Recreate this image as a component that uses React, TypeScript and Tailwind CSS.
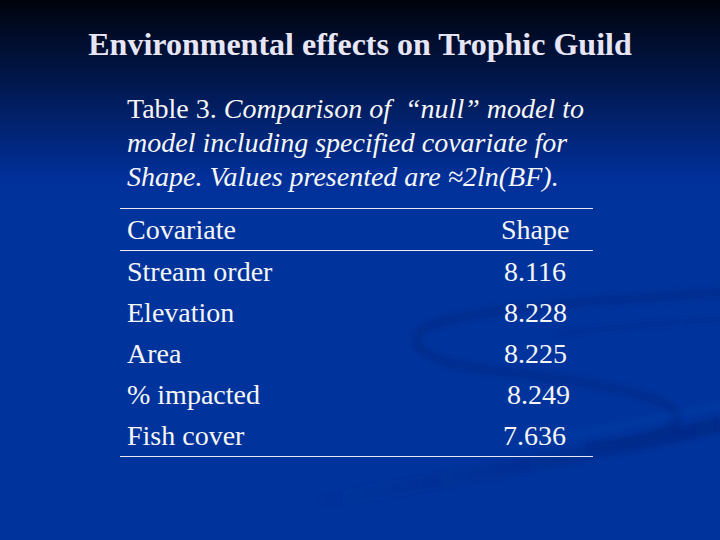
import React from "react";

const rows: [string, string, string][] = [
  ["Stream order", "8.116", "pl-[3px]"],
  ["Elevation", "8.228", "pl-[3px]"],
  ["Area", "8.225", "pl-[3px]"],
  ["% impacted", "8.249", "pl-[6px]"],
  ["Fish cover", "7.636", "pl-[2px]"],
];

function Swirl() {
  return (
    <svg
      className="absolute inset-0 pointer-events-none"
      width="720"
      height="540"
      viewBox="0 0 720 540"
    >
      <defs>
        <filter id="soft" x="-10%" y="-10%" width="120%" height="120%">
          <feGaussianBlur stdDeviation="2.5" />
        </filter>
        <linearGradient id="fadeL" x1="0" y1="0" x2="1" y2="0">
          <stop offset="0" stopColor="#00288a" stopOpacity="0" />
          <stop offset="0.5" stopColor="#00288a" stopOpacity="0.45" />
          <stop offset="1" stopColor="#002682" stopOpacity="0.75" />
        </linearGradient>
      </defs>
      <g filter="url(#soft)" fill="none" strokeLinecap="round">
        <path
          d="M 735 292 C 640 298 480 306 428 326 C 400 340 420 362 490 370 C 575 380 655 392 674 410 C 690 428 650 440 590 446"
          stroke="#00298a"
          strokeOpacity="0.7"
          strokeWidth="10"
        />
        <path
          d="M 735 318 C 680 322 600 328 560 334"
          stroke="#00298a"
          strokeOpacity="0.4"
          strokeWidth="6"
        />
        <path
          d="M 740 420 C 660 440 540 464 300 505"
          stroke="url(#fadeL)"
          strokeWidth="16"
        />
        <path
          d="M 740 400 C 680 414 600 430 520 444"
          stroke="#1a48b0"
          strokeOpacity="0.2"
          strokeWidth="8"
        />
      </g>
    </svg>
  );
}

export default function App() {
  return (
    <div className="relative w-[720px] h-[540px] overflow-hidden bg-[linear-gradient(180deg,#00030c_0%,#010f33_9%,#011d5e_19%,#01309a_33%,#00349c_40%,#00349c_100%)] font-['Liberation_Serif','Times_New_Roman',serif]">
      <Swirl />
      <div className="relative flex flex-col">
        <h1 className="pt-[26px] text-center text-[32px] leading-[37px] font-bold text-[#e6e6f6]">
          Environmental effects on Trophic Guild
        </h1>
        <p className="mt-[29px] ml-[127px] text-[28px] leading-[34px] text-[#f6f6f6]">
          Table 3. <i>Comparison of &nbsp;“null” model to</i>
          <br />
          <i>model including specified covariate for</i>
          <br />
          <i>Shape. Values presented are ≈2ln(BF).</i>
        </p>
        <div className="mt-[14px] ml-[120px] w-[473px] flex flex-col text-[28px] leading-[41px] text-[#f6f6f6]">
          <div className="h-px bg-[#e8e8f2]" />
          <div className="flex">
            <span className="pl-[7px] w-[381px]">Covariate</span>
            <span>Shape</span>
          </div>
          <div className="h-px bg-[#e8e8f2]" />
          {rows.map(([name, val, pad]) => (
            <div key={name} className="flex">
              <span className="pl-[7px] w-[381px]">{name}</span>
              <span className={pad}>{val}</span>
            </div>
          ))}
          <div className="h-px bg-[#e8e8f2]" />
        </div>
      </div>
    </div>
  );
}
